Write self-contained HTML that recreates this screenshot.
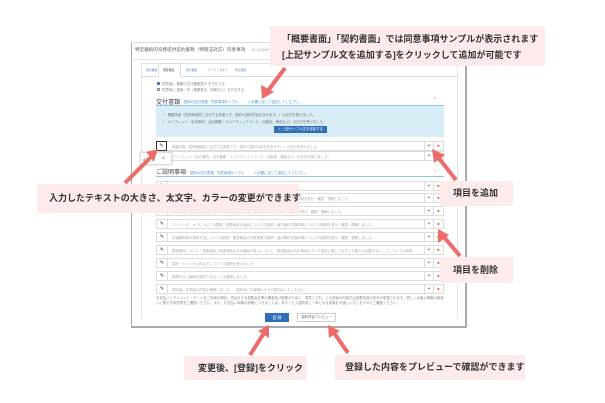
<!DOCTYPE html>
<html><head><meta charset="utf-8"><style>
*{margin:0;padding:0;box-sizing:border-box}
body{width:605px;height:403px;background:#fff;position:relative;overflow:hidden;font-family:"Liberation Sans","Noto Sans CJK JP",sans-serif;color:#555}
.a{position:absolute}
.t{font-size:4px;color:#888;white-space:nowrap;overflow:hidden}
.row{position:absolute;left:156px;width:288px;height:10px;border:1px solid #ddd;background:#fff}
.row .ic{position:absolute;left:0;top:0;width:11px;height:8px;border-right:1px solid #ddd;font-size:5px;text-align:center;line-height:8px;color:#333}
.row .tx{position:absolute;left:15px;top:2px;font-size:3.4px;color:#aaa;white-space:nowrap;width:250px;overflow:hidden}
.row .p{position:absolute;right:10px;top:0;width:9px;height:8px;border-left:1px solid #ddd;font-size:5px;text-align:center;line-height:8px;color:#555}
.row .x{position:absolute;right:0;top:0;width:10px;height:8px;border-left:1px solid #ddd;font-size:4px;text-align:center;line-height:8px;color:#f07040}
.call{position:absolute;background:#fdeaea;font-weight:bold;color:#333;font-size:9px;white-space:nowrap}
.lk{color:#4a8fd0;font-size:3.4px}
</style></head><body>
<div class="a" style="left:131px;top:42px;width:336px;height:286px;border:1px solid #aaa;border-top:none;border-right:2px solid #aaa;border-bottom:2px solid #aaa;background:#fff"></div>
<div class="a" style="left:131px;top:42px;width:336px;height:1px;background:#ddd"></div>
<div class="a t" style="left:135px;top:47px;font-size:4.6px;color:#666">特定継続的役務提供契約書類（特商法対応）同意事項</div>
<div class="a t" style="left:252px;top:48px;font-size:3.5px;color:#aaa">ID:1234567</div>
<div class="a" style="left:131px;top:59px;width:335px;height:1px;background:#e5e5e5"></div>
<div class="a" style="left:141px;top:63px;width:317px;height:255px;border:1px solid #e5e5e5;border-bottom:none"></div>
<div class="a" style="left:141px;top:76px;width:317px;height:1px;background:#ddd"></div>
<div class="a" style="left:158px;top:63px;width:23px;height:14px;border:1px solid #ddd;border-bottom:1px solid #fff;background:#fff"></div>
<div class="a t" style="left:146px;top:68px;font-size:2.8px;color:#5b8fc8">契約書類</div>
<div class="a t" style="left:163px;top:68px;font-size:2.8px;color:#555">概要書面</div>
<div class="a t" style="left:186px;top:68px;font-size:2.8px;color:#5b8fc8">契約書面</div>
<div class="a t" style="left:208px;top:68px;font-size:2.8px;color:#5b8fc8">クーリングオフ</div>
<div class="a t" style="left:235px;top:68px;font-size:2.8px;color:#5b8fc8">申込期間</div>
<div class="a" style="left:157px;top:82px;width:3px;height:3px;background:#3c7bd0"></div>
<div class="a t" style="left:162px;top:81px;font-size:3.4px">同意後に 概要の交付確認表示 を付与する</div>
<div class="a" style="left:157px;top:88px;width:3px;height:3px;border:0.5px solid #888"></div>
<div class="a t" style="left:162px;top:87px;font-size:3.4px">同意後に 表紙一式（概要表示、約款など）を付与する</div>
<div class="a" style="left:156px;top:97px;font-size:6px;color:#444">交付書類</div>
<div class="a lk" style="left:184px;top:99px">契約の交付書類　同意事項サンプル</div>
<div class="a lk" style="left:248px;top:99px">※必要に応じて追加してください。</div>
<div class="a" style="left:434px;top:97px;font-size:5px;color:#99a">^</div>
<div class="a" style="left:156px;top:105px;width:288px;height:1px;background:#8cc8e0"></div>
<div class="a" style="left:156px;top:106px;width:288px;height:31px;background:#d8edf6"></div>
<div class="a t" style="left:163px;top:112px;font-size:3.4px;color:#777">•　概要書面（契約締結前に交付する書面です。契約の契約内容を含みます。）の交付を受けました。</div>
<div class="a t" style="left:163px;top:119px;font-size:3.4px;color:#777">•　パンフレット（社内案内、会社概要・エステティックコース・化粧品、商品など）の交付を受けました。</div>
<div class="a" style="left:274px;top:126px;width:53px;height:7px;background:#2f6fb8;color:#fff;font-size:3.4px;text-align:center;line-height:7px">＋ 上記サンプル文を追加する</div>
<div class="row" style="top:141px"><div class="ic" style="border:1px solid #333;left:-1px;top:-1px;height:10px">✎</div><div class="tx">概要書面（契約締結前に交付する書面です。契約の契約内容を含みます。）の交付を受けました。</div><div class="p">+</div><div class="x">■</div></div>
<div class="row" style="top:151px"><div class="tx">パンフレット（社内案内、会社概要・エステティックコース・化粧品、商品など）の交付を受けました。</div><div class="p">+</div></div>
<div class="a" style="left:140px;top:152px;width:32px;height:13px;background:#fff;border:1px solid #ddd;box-shadow:0 0 2px #ccc"></div>
<div class="a t" style="left:143px;top:157px;color:#555">A</div><div class="a t" style="left:152px;top:157px;color:#555">B</div><div class="a t" style="left:162px;top:155px;color:#555">A</div>
<div class="a" style="left:156px;top:167px;font-size:6px;color:#444">ご説明事項</div>
<div class="a lk" style="left:190px;top:170px">契約の交付書類　同意事項サンプル</div>
<div class="a lk" style="left:254px;top:170px">※必要に応じて追加してください。</div>
<div class="a" style="left:434px;top:168px;font-size:4px;color:#99a">v</div>
<div class="a" style="left:156px;top:176px;width:288px;height:1px;background:#8cc8e0"></div>
<div class="row" style="top:181px"><div class="ic">✎</div><div class="tx">この契約をよく読み、内容を十分に確認・理解しました。</div><div class="p">+</div><div class="x">■</div></div>
<div class="row" style="top:193px"><div class="ic">✎</div><div class="tx">支払総額、支払方法、支払期限について説明を受けました。役務提供期間について説明を受け、確認・理解しました。</div><div class="p">+</div><div class="x">■</div></div>
<div class="row" style="top:206px"><div class="ic">✎</div><div class="tx">契約に関する主たる役務（役務の種類と回数と価格、役務ごとの主な内容）の説明を受け、確認・理解しました。</div><div class="p">+</div><div class="x">■</div></div>
<div class="row" style="top:219px"><div class="ic">✎</div><div class="tx">クーリング・オフについての説明・関連商品の返品についての説明・途中解約手数料等についての説明を受け、確認・理解しました。</div><div class="p">+</div><div class="x">■</div></div>
<div class="row" style="top:232px"><div class="ic">✎</div><div class="tx">中途解約時の精算方法についての説明・関連商品の引取費用の説明・途中解約手数料等についての説明を受け、確認・理解しました。</div><div class="p">+</div><div class="x">■</div></div>
<div class="row" style="top:245px"><div class="ic">✎</div><div class="tx">関連商品について・関連商品と関連商品以外の商品の扱いについて・関連商品以外の商品はコース契約に際して必ずしも購入の必要がないことについての説明</div><div class="p">+</div><div class="x">■</div></div>
<div class="row" style="top:258px"><div class="ic">✎</div><div class="tx">契約・キャンセル料などについての説明を受けました。</div><div class="p">+</div><div class="x">■</div></div>
<div class="row" style="top:271px"><div class="ic">✎</div><div class="tx">無理のない範囲の契約であることを確認しました。</div><div class="p">+</div><div class="x">■</div></div>
<div class="row" style="top:284px"><div class="ic">✎</div><div class="tx">契約前に本書面の内容を理解しました。（契約時にお客様のみでの契約はいたしません。）</div><div class="p">+</div><div class="x">■</div></div>
<div class="a" style="left:156px;top:296px;width:290px;font-size:3.4px;line-height:4.8px;color:#888">お支払いにクレジット・ローンをご利用の場合、申込をする信販会社等の審査及び役務のために、同意とされ、この書面の内容又は役務内容の状況が変更されます。詳しくは個人情報の取扱いに関する同意書をご確認ください。また、お支払い時期の詳細につきましては、本サービス契約書と一体となる書面をお渡しいたしますのでご確認ください。</div>
<div class="a" style="left:265px;top:313px;width:24px;height:9px;background:#2f6fb8;color:#fff;font-size:4px;text-align:center;line-height:9px">登 録</div>
<div class="a" style="left:297px;top:313px;width:39px;height:9px;border:1px solid #ccc;background:#fff;color:#666;font-size:3.4px;text-align:center;line-height:7px">契約内容プレビュー</div>
<div class="call" style="left:270px;top:26px;width:275px;height:40px;padding:5px 0 0 12px;line-height:16px">「概要書面」「契約書面」では同意事項サンプルが表示されます<br>[上記サンプル文を追加する]をクリックして追加が可能です</div>
<div class="call" style="left:37px;top:184px;width:262px;height:29px;padding-left:12px;line-height:29px">入力したテキストの大きさ、太文字、カラーの変更ができます</div>
<div class="call" style="left:440px;top:181px;width:73px;height:25px;padding-left:13px;line-height:25px">項目を追加</div>
<div class="call" style="left:440px;top:257px;width:73px;height:26px;padding-left:13px;line-height:26px">項目を削除</div>
<div class="call" style="left:184px;top:356px;width:123px;height:24px;padding-left:14px;line-height:24px">変更後、[登録]をクリック</div>
<div class="call" style="left:335px;top:355px;width:190px;height:25px;padding-left:10px;line-height:25px">登録した内容をプレビューで確認ができます</div>
<svg class="a" style="left:0;top:0" width="605" height="403">
<g stroke="#ee6b6b" stroke-width="4" fill="#ee6b6b" stroke-linecap="butt">
<line x1="285" y1="68" x2="267" y2="92"/><polygon points="262,99 261,85 274,92" stroke="none"/>
<line x1="125" y1="183" x2="152" y2="156"/><polygon points="158,149 146,152 154,161" stroke="none"/>
<line x1="456" y1="180" x2="438" y2="157"/><polygon points="432,149 434,163 445,155" stroke="none"/>
<line x1="460" y1="256" x2="444" y2="237"/><polygon points="438,229 438,243 449,235" stroke="none"/>
<line x1="250" y1="355" x2="264" y2="333"/><polygon points="269,325 258,331 269,338" stroke="none"/>
<line x1="348" y1="353" x2="334" y2="333"/><polygon points="328,325 329,338 340,331" stroke="none"/>
</g></svg>
</body></html>
